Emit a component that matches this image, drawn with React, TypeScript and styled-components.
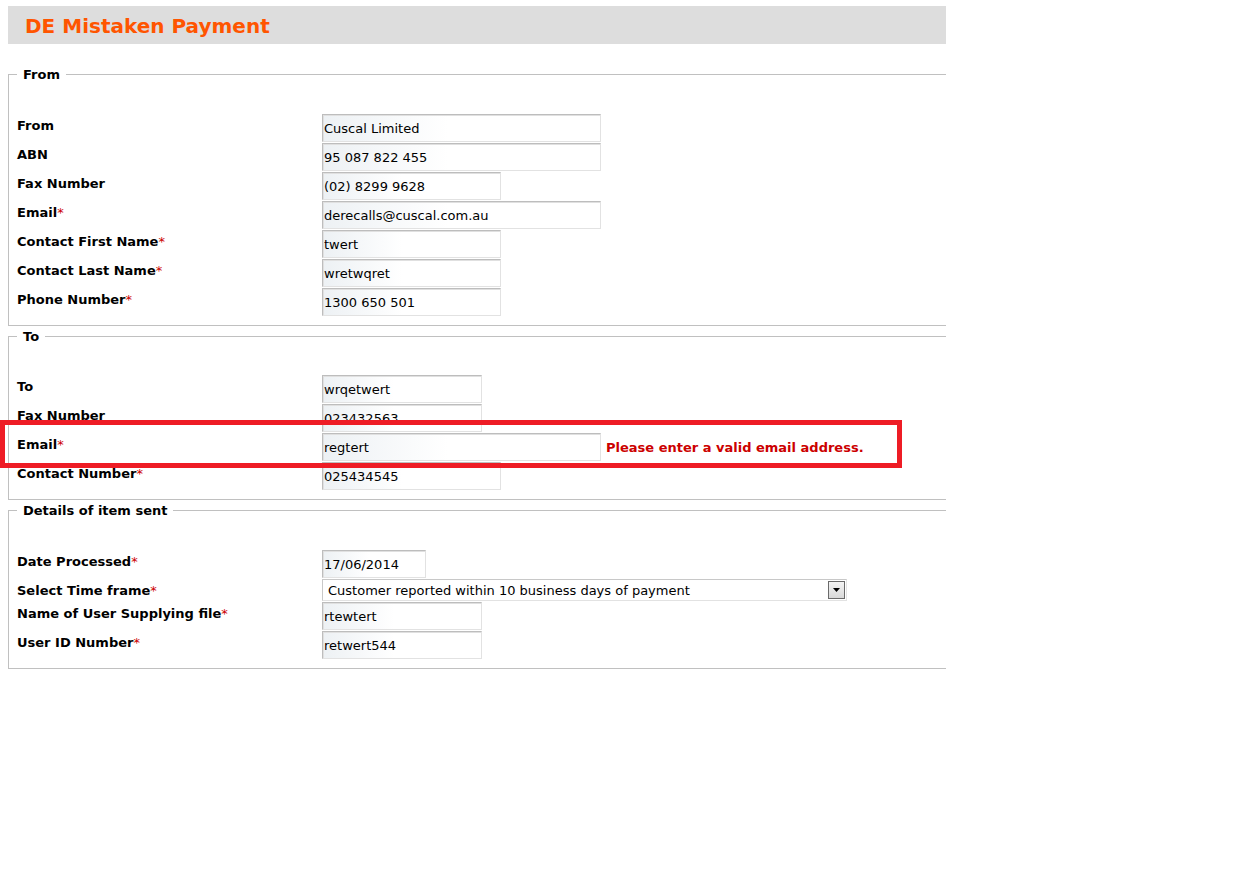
import React from "react";
import styled, { createGlobalStyle } from "styled-components";

const GlobalStyle = createGlobalStyle`
  html, body {
    margin: 0;
    padding: 0;
    background: #fff;
  }
  body {
    font-family: "DejaVu Sans", Verdana, sans-serif;
    font-size: 13px;
    color: #000;
  }
`;

type Field = {
  label: string;
  value: string;
  required?: boolean;
  width?: number;
  error?: string;
  select?: boolean;
};

const fromFields: Field[] = [
  { label: "From", value: "Cuscal Limited", width: 279 },
  { label: "ABN", value: "95 087 822 455", width: 279 },
  { label: "Fax Number", value: "(02) 8299 9628", width: 179 },
  { label: "Email", value: "derecalls@cuscal.com.au", required: true, width: 279 },
  { label: "Contact First Name", value: "twert", required: true, width: 179 },
  { label: "Contact Last Name", value: "wretwqret", required: true, width: 179 },
  { label: "Phone Number", value: "1300 650 501", required: true, width: 179 },
];

const toFields: Field[] = [
  { label: "To", value: "wrqetwert", width: 160 },
  { label: "Fax Number", value: "023432563", width: 160 },
  {
    label: "Email",
    value: "regtert",
    required: true,
    width: 279,
    error: "Please enter a valid email address.",
  },
  { label: "Contact Number", value: "025434545", required: true, width: 179 },
];

const detailFields: Field[] = [
  { label: "Date Processed", value: "17/06/2014", required: true, width: 104 },
  {
    label: "Select Time frame",
    value: "Customer reported within 10 business days of payment",
    required: true,
    width: 525,
    select: true,
  },
  { label: "Name of User Supplying file", value: "rtewtert", required: true, width: 160 },
  { label: "User ID Number", value: "retwert544", required: true, width: 160 },
];

export default function App() {
  return (
    <>
      <GlobalStyle />
      <Page>
        <Header>
          <Title>DE Mistaken Payment</Title>
        </Header>
        <Section legend="From" fields={fromFields} />
        <Section legend="To" fields={toFields} top={31} />
        <Section legend="Details of item sent" fields={detailFields} />
        <Highlight />
      </Page>
    </>
  );
}

const Section = ({
  legend,
  fields,
  top = 32,
}: {
  legend: string;
  fields: Field[];
  top?: number;
}) => (
  <FieldSet $top={top}>
    <Legend>{legend}</Legend>
    {fields.map((f, i) => (
      <Row key={i} $select={f.select}>
        <Label>
          {f.label}
          {f.required && <Req>*</Req>}
        </Label>
        <Control>
          {f.select ? (
            <SelectWrap style={{ width: f.width }}>
              <Select defaultValue={f.value}>
                <option>{f.value}</option>
              </Select>
              <Arrow>
                <svg width="7" height="4" viewBox="0 0 7 4">
                  <path d="M0 0h7L3.5 4z" fill="#000" />
                </svg>
              </Arrow>
            </SelectWrap>
          ) : (
            <Input defaultValue={f.value} style={{ width: f.width }} />
          )}
          {f.error && <Error>{f.error}</Error>}
        </Control>
      </Row>
    ))}
  </FieldSet>
);

const Page = styled.div`
  position: relative;
  width: 938px;
  padding: 6px 0 0 8px;
`;

const Header = styled.div`
  height: 38px;
  background: #dddddd;
  display: flex;
  align-items: center;
  padding: 1px 0 0 17px;
  box-sizing: border-box;
  margin-bottom: 23px;
`;

const Title = styled.h1`
  margin: 0;
  font-size: 20px;
  font-weight: bold;
  color: #ff5500;
`;

const FieldSet = styled.fieldset<{ $top: number }>`
  margin: 0 0 3px;
  padding: ${(p) => p.$top}px 0 8px 8px;
  border: 1px solid #c0c0c0;
  border-right: none;
`;

const Legend = styled.legend`
  padding: 0 6px;
  font-weight: bold;
  font-size: 13px;
`;

const Row = styled.div<{ $select?: boolean }>`
  display: grid;
  grid-template-columns: 305px 1fr;
  align-items: start;
  margin-bottom: 1px;
  height: ${(p) => (p.$select ? "22px" : "28px")};
`;

const Label = styled.div`
  padding-top: 4px;
  font-weight: bold;
  line-height: 16px;
`;

const Req = styled.span`
  color: #cc0000;
  font-weight: normal;
`;

const Control = styled.div`
  display: flex;
  align-items: center;
  gap: 5px;
`;

const Input = styled.input`
  box-sizing: border-box;
  height: 28px;
  margin: 0;
  padding: 1px 1px 0;
  font-family: "DejaVu Sans", Verdana, sans-serif;
  font-size: 13px;
  color: #000;
  border: 1px solid;
  border-color: #bdbdbd #e2e2e2 #e2e2e2 #bdbdbd;
  box-shadow: inset 1px 1px 0 #e0e0e0;
  background: linear-gradient(to right, #edf1f4 0%, #ffffff 45%);
  outline: none;
`;

const SelectWrap = styled.div`
  position: relative;
  height: 22px;
`;

const Select = styled.select`
  display: block;
  box-sizing: border-box;
  width: 100%;
  height: 22px;
  margin: 0;
  padding: 0 0 0 5px;
  appearance: none;
  font-family: "DejaVu Sans", Verdana, sans-serif;
  font-size: 13px;
  color: #000;
  border: 1px solid;
  border-color: #c8c8c8 #e2e2e2 #e2e2e2 #c8c8c8;
  background: #fff;
  outline: none;
`;

const Arrow = styled.span`
  position: absolute;
  top: 2px;
  right: 2px;
  box-sizing: border-box;
  width: 17px;
  height: 18px;
  border: 1px solid #6a6a6a;
  background: linear-gradient(#f4f4f4, #d8d8d8);
  display: flex;
  align-items: center;
  justify-content: center;
  pointer-events: none;
`;

const Error = styled.span`
  font-weight: bold;
  color: #cc0000;
`;

const Highlight = styled.div`
  position: absolute;
  left: 0;
  top: 420px;
  width: 902px;
  height: 48px;
  box-sizing: border-box;
  border: 5px solid #ee1c25;
  pointer-events: none;
`;
